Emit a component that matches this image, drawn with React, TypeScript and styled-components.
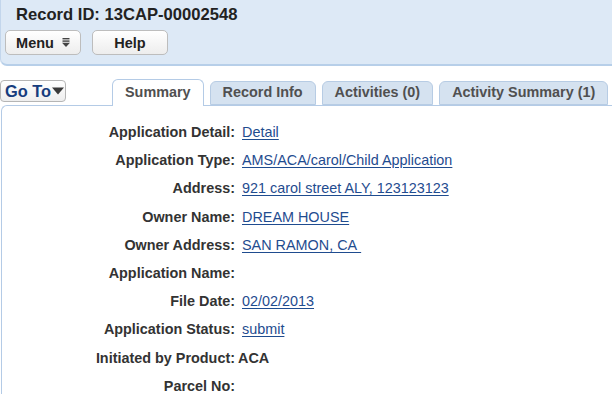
import React from "react";
import styled, { createGlobalStyle } from "styled-components";

const Global = createGlobalStyle`
  html, body { margin: 0; padding: 0; background: #fff; }
  body { font-family: "Liberation Sans", Arial, sans-serif; font-size: 14px; color: #333; }
`;

const Page = styled.div`
  width: 612px;
  height: 394px;
  overflow: hidden;
  background: #fff;
`;

const Header = styled.header`
  height: 59px;
  padding-top: 5px;
  background: #dde9f6;
  border-left: 1px solid #c3d6ec;
  border-bottom: 2px solid #b7cfe9;
  border-bottom-left-radius: 7px;
  box-sizing: content-box;
`;

const Title = styled.h1`
  margin: 0 0 0 15px;
  font-size: 16.6px;
  line-height: 20px;
  font-weight: bold;
  color: #222;
`;

const ButtonRow = styled.div`
  display: flex;
  gap: 11px;
  margin: 5px 0 0 4px;
`;

const HeadButton = styled.button`
  display: flex;
  align-items: center;
  justify-content: center;
  gap: 8px;
  width: 76px;
  height: 25px;
  padding: 0;
  border: 1px solid #bdbdbd;
  border-radius: 5px;
  background: linear-gradient(#ffffff, #ededed);
  font-family: inherit;
  font-size: 14.5px;
  font-weight: bold;
  color: #222;
`;

const NavRow = styled.div`
  display: flex;
  align-items: flex-start;
  margin-top: 13px;
  height: 26px;
`;

const GoTo = styled.button`
  display: flex;
  align-items: center;
  width: 66px;
  height: 22px;
  margin-top: 1px;
  padding: 0 0 0 4px;
  border: 1px solid #b5b5b5;
  border-radius: 4px;
  background: linear-gradient(#ffffff, #eeeeee);
  font-family: inherit;
  font-size: 16.4px;
  font-weight: bold;
  color: #173d7e;
`;

const Tabs = styled.div`
  display: flex;
  gap: 6px;
  margin-left: 46px;
  align-items: flex-end;
  height: 26px;
`;

const Tab = styled.div<{ $active?: boolean }>`
  position: relative;
  z-index: 1;
  box-sizing: border-box;
  height: ${(p) => (p.$active ? "27px" : "24px")};
  padding: 0 12px 2px;
  margin-bottom: ${(p) => (p.$active ? "-1px" : "0")};
  display: flex;
  align-items: center;
  justify-content: center;
  font-size: 14.4px;
  font-weight: bold;
  color: #505050;
  background: ${(p) => (p.$active ? "#fff" : "#d5e2f0")};
  border: 1px solid ${(p) => (p.$active ? "#b4cbe6" : "#b7cce4")};
  border-bottom: ${(p) => (p.$active ? "none" : "1px solid #b7cce4")};
  border-radius: 6px 6px 0 0;
`;

const Content = styled.section`
  margin-left: 1px;
  border-top: 1px solid #b4cbe6;
  border-left: 1px solid #b4cbe6;
  border-top-left-radius: 6px;
  padding: 12px 0 0 91px;
  height: 300px;
`;

const Row = styled.div<{ $tight?: boolean }>`
  display: flex;
  gap: ${(p) => (p.$tight ? "3px" : "7px")};
  height: 28.2px;
  line-height: 28px;
  font-size: 14.4px;
  white-space: nowrap;
`;

const Label = styled.span`
  min-width: 142px;
  text-align: right;
  font-weight: bold;
  color: #333;
`;

const Value = styled.span`
  color: #333;
  font-weight: bold;
`;

const Link = styled.a`
  color: #1f4c8f;
  text-decoration: underline;
  text-underline-offset: 2px;
`;

const MenuIcon = () => (
  <svg width="8" height="9" viewBox="0 0 8 9">
    <rect x="0.5" y="0" width="7" height="1.4" fill="#444" />
    <rect x="0.5" y="2.4" width="7" height="1.4" fill="#444" />
    <path d="M0 4.8 H8 L4 9 Z" fill="#444" />
  </svg>
);

const Caret = () => (
  <svg width="12" height="8" viewBox="0 0 12 8" style={{ marginLeft: 1 }}>
    <path d="M0 0.5 H12 L6 7.5 Z" fill="#3a3a3a" />
  </svg>
);

const rows: { label: string; value: string; link?: boolean; tight?: boolean }[] = [
  { label: "Application Detail:", value: "Detail", link: true },
  { label: "Application Type:", value: "AMS/ACA/carol/Child Application", link: true },
  { label: "Address:", value: "921 carol street ALY, 123123123", link: true },
  { label: "Owner Name:", value: "DREAM HOUSE", link: true },
  { label: "Owner Address:", value: "SAN RAMON, CA\u00a0", link: true },
  { label: "Application Name:", value: "" },
  { label: "File Date:", value: "02/02/2013", link: true },
  { label: "Application Status:", value: "submit", link: true },
  { label: "Initiated by Product:", value: "ACA", tight: true },
  { label: "Parcel No:", value: "" },
];

export default function App() {
  return (
    <Page>
      <Global />
      <Header>
        <Title>Record ID: 13CAP-00002548</Title>
        <ButtonRow>
          <HeadButton>
            Menu <MenuIcon />
          </HeadButton>
          <HeadButton>Help</HeadButton>
        </ButtonRow>
      </Header>
      <NavRow>
        <GoTo>
          Go To
          <Caret />
        </GoTo>
        <Tabs>
          <Tab $active>Summary</Tab>
          <Tab>Record Info</Tab>
          <Tab>Activities (0)</Tab>
          <Tab>Activity Summary (1)</Tab>
        </Tabs>
      </NavRow>
      <Content>
        {rows.map((r) => (
          <Row key={r.label} $tight={r.tight}>
            <Label>{r.label}</Label>
            {r.link ? (
              <Link href="#">{r.value}</Link>
            ) : (
              <Value>{r.value}</Value>
            )}
          </Row>
        ))}
      </Content>
    </Page>
  );
}
